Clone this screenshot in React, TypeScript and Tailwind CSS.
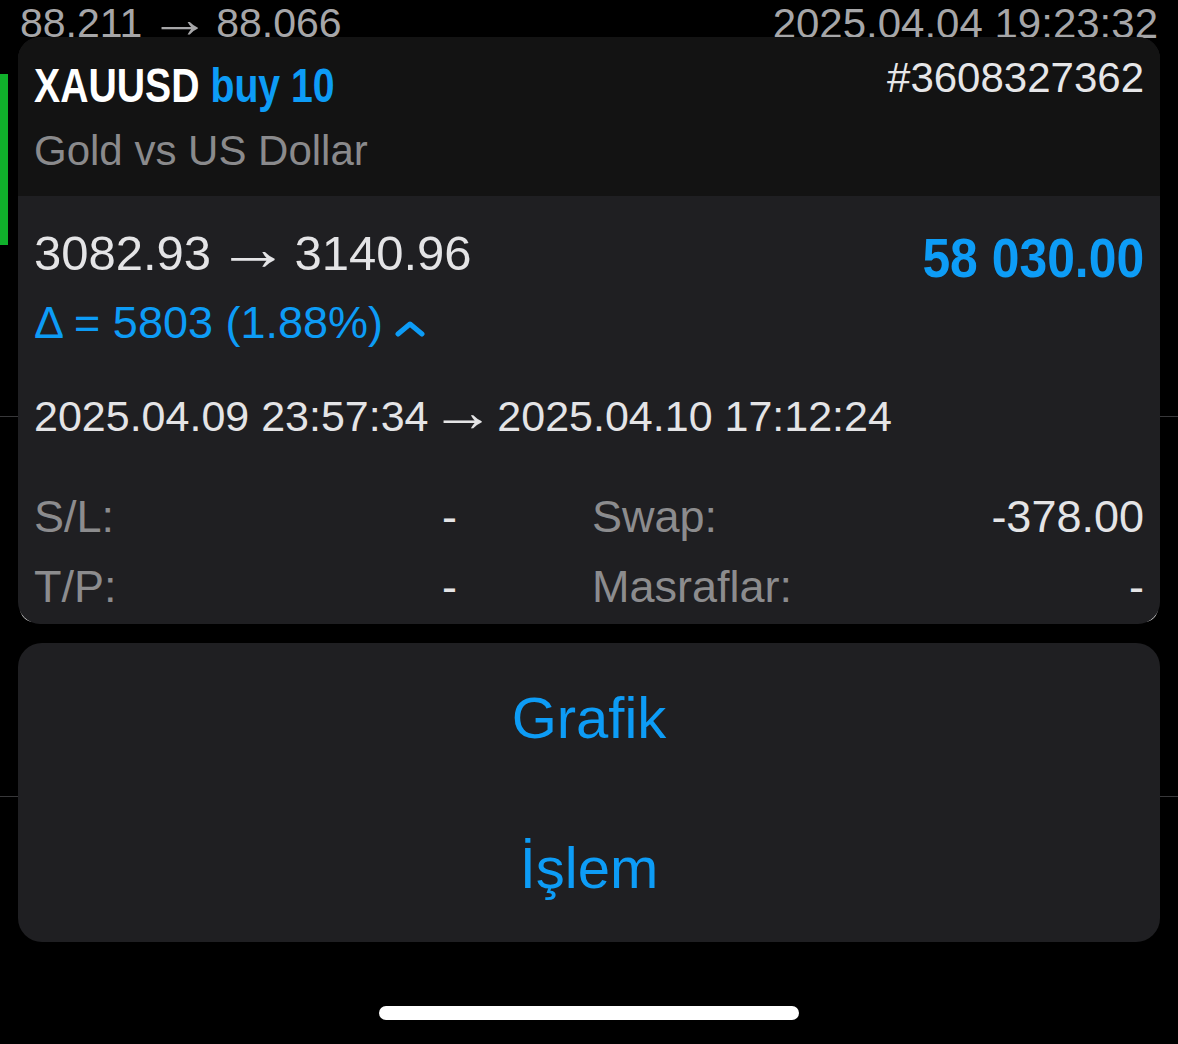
import type { JSX } from "react/jsx-runtime";

const helv = "font-['Liberation_Sans',Arial,sans-serif]";

function Arrow({ w = "w-[1.7em]" }: { w?: string }): JSX.Element {
  return (
    <span className={`inline-flex justify-center ${w}`}>
      <span className="inline-block scale-x-[1.15] text-[1.3em] leading-[0] align-[0.12em]">→</span>
    </span>
  );
}

function Chevron(): JSX.Element {
  return (
    <svg width="30" height="16" viewBox="0 0 30 16" className="ml-[12px] mt-[21px]">
      <polyline
        points="3,13 15,3 27,13"
        fill="none"
        stroke="#0d9cf6"
        strokeWidth="5"
        strokeLinecap="round"
        strokeLinejoin="round"
      />
    </svg>
  );
}

function InfoRow({ label, value }: { label: string; value: string }): JSX.Element {
  return (
    <div className="flex items-start justify-between leading-none">
      <span className="text-[#8c8c8e]">{label}</span>
      <span className="text-[#e4e4e6]">{value}</span>
    </div>
  );
}

export default function App(): JSX.Element {
  return (
    <div className={`relative h-[1044px] w-[1178px] overflow-hidden bg-black ${helv}`}>
      {/* list behind the sheet */}
      <div className="flex flex-col">
        <div className="flex items-start justify-between px-[20px] pt-[3px] leading-none text-[#a6a6a8]">
          <span className="text-[41px]">
            88.211<Arrow w="w-[1.8em]" />88.066
          </span>
          <span className="text-[42px]">2025.04.04 19:23:32</span>
        </div>
        <div className="mt-[29px] h-[171px] w-[8px] bg-[#10b02b]" />
        <div className="mt-[171px] h-px bg-[#38383a]" />
        <div className="mx-[20px] mt-[144px] h-[61px] rounded-[14px] border-2 border-[#e8e8e8]" />
        <div className="mt-[174px] h-px bg-[#38383a]" />
      </div>

      {/* sheet */}
      <div className="absolute inset-0 flex flex-col px-[18px] pt-[37px]">
        <div className="overflow-hidden rounded-[22px] bg-[#1f1f22]">
          <div className="bg-[#131313] px-[16px] pt-[20px] pb-[24px]">
            <div className="flex items-start justify-between">
              <div className="mt-[4px] origin-left scale-x-[0.8] whitespace-nowrap text-[49px] font-bold leading-none">
                <span className="text-white">XAUUSD</span>{" "}
                <span className="text-[#0d9cf6]">buy 10</span>
              </div>
              <div className="text-[42px] leading-none text-[#e6e6e8]">#3608327362</div>
            </div>
            <div className="mt-[20px] text-[42px] leading-none text-[#8a8a8c]">Gold vs US Dollar</div>
          </div>

          <div className="px-[16px] pt-[33px] pb-[15px]">
            <div className="flex items-start justify-between">
              <div className="flex flex-col">
                <div className="text-[49px] leading-none text-[#e4e4e6]">
                  3082.93<Arrow />3140.96
                </div>
                <div className="mt-[22px] flex items-start text-[45px] leading-none text-[#0d9cf6]">
                  <span>Δ = 5803 (1.88%)</span>
                  <Chevron />
                </div>
              </div>
              <div className="mt-[1px] origin-right scale-x-[0.89] whitespace-nowrap text-[56px] font-bold leading-none text-[#0d9cf6]">
                58 030.00
              </div>
            </div>

            <div className="mt-[50px] text-[43px] leading-none text-[#e4e4e6]">
              2025.04.09 23:57:34<Arrow w="w-[1.6em]" />2025.04.10 17:12:24
            </div>

            <div className="mt-[56px] grid grid-cols-[423px_1fr] gap-x-[135px] gap-y-[25px] text-[45px]">
              <InfoRow label="S/L:" value="-" />
              <InfoRow label="Swap:" value="-378.00" />
              <InfoRow label="T/P:" value="-" />
              <InfoRow label="Masraflar:" value="-" />
            </div>
          </div>
        </div>

        <div className="mt-[19px] flex flex-col rounded-[24px] bg-[#1f1f22] text-[58px] text-[#0d9cf6]">
          <button className="flex h-[150px] items-center justify-center leading-none">Grafik</button>
          <button className="flex h-[149px] items-center justify-center leading-none">İşlem</button>
        </div>

        <div className="mt-[64px] flex justify-center">
          <div className="h-[14px] w-[420px] rounded-full bg-white" />
        </div>
      </div>
    </div>
  );
}
